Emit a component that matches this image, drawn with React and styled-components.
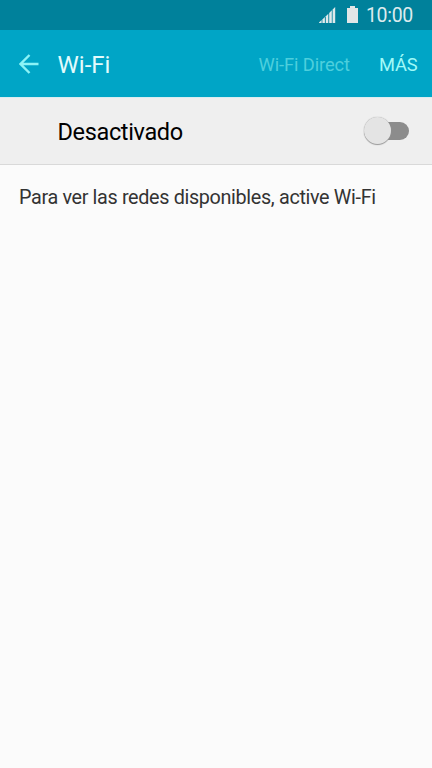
import styled, { createGlobalStyle } from "styled-components";

const App = () => {
  return (
    <Screen>
      <GlobalStyle />
      <StatusBar>
        <SignalIcon />
        <BatteryIcon />
        <Clock>10:00</Clock>
      </StatusBar>
      <ActionBar>
        <BackIcon />
        <Title>Wi-Fi</Title>
        <Action disabled>Wi-Fi Direct</Action>
        <Action>MÁS</Action>
      </ActionBar>
      <SwitchRow>
        <SwitchLabel>Desactivado</SwitchLabel>
        <Switch>
          <SwitchTrack />
          <SwitchThumb />
        </Switch>
      </SwitchRow>
      <Message>Para ver las redes disponibles, active Wi-Fi</Message>
    </Screen>
  );
};

export default App;

const SignalIcon = () => (
  <svg width="17" height="16" viewBox="0 0 17 16" fill="#dfe9eb">
    <path d="M0 16V15.6L2.6 13V16z" />
    <path d="M3.4 16V12.5L5.9 10V16z" />
    <path d="M6.8 16V9.2L9.3 6.7V16z" />
    <path d="M10.2 16V5.9L12.8 3.3V16z" />
    <path d="M13.6 16V2.6L16.2 0V16z" />
  </svg>
);

const BatteryIcon = () => (
  <BatterySvg width="11" height="17" viewBox="0 0 11 17" fill="#e2e6e7">
    <path d="M3 0h5v2h3v15H0V2h3z" />
  </BatterySvg>
);

const BackIcon = () => (
  <svg width="20" height="20" viewBox="0 0 20 20" fill="none">
    <path d="M19.5 10H2M10.5 1L1.5 10L10.5 19" stroke="#8cf3f6" strokeWidth="2.4" />
  </svg>
);

const GlobalStyle = createGlobalStyle`
  body {
    margin: 0;
    background: #fbfbfb;
  }
`;

const Screen = styled.div`
  width: 432px;
  height: 768px;
  background: #fbfbfb;
  font-family: Roboto, sans-serif;
  overflow: hidden;
`;

const StatusBar = styled.div`
  display: flex;
  align-items: center;
  justify-content: flex-end;
  height: 30px;
  padding-right: 19px;
  box-sizing: border-box;
  background: #00819b;
`;

const BatterySvg = styled.svg`
  margin: 0 8px 1px 11px;
`;

const Clock = styled.span`
  padding-top: 2px;
  font-size: 19.5px;
  line-height: 30px;
  letter-spacing: -0.3px;
  color: #dcebee;
`;

const ActionBar = styled.header`
  display: flex;
  align-items: center;
  height: 67px;
  padding: 0 14.5px 0 19px;
  box-sizing: border-box;
  background: #00a5c6;
`;

const Title = styled.h1`
  flex: 1;
  margin: 0 0 0 18.5px;
  padding-top: 2px;
  font-size: 24px;
  font-weight: 400;
  color: #e2fbfc;
`;

const Action = styled.button`
  margin-left: 29px;
  padding: 1px 0 0;
  border: 0;
  background: none;
  font-family: inherit;
  font-size: 18.3px;
  letter-spacing: -0.1px;
  color: ${({ disabled }) => (disabled ? "#4dcfdd" : "#a0faf8")};
`;

const SwitchRow = styled.div`
  display: flex;
  align-items: center;
  justify-content: space-between;
  height: 68px;
  padding: 0 23px 0 57.5px;
  box-sizing: border-box;
  background: #efefef;
  border-top: 1px solid #d9edf1;
  border-bottom: 1px solid #d9d9d9;
`;

const SwitchLabel = styled.span`
  padding-top: 2px;
  font-size: 23.5px;
  letter-spacing: -0.35px;
  color: #000;
`;

const Switch = styled.div`
  position: relative;
  display: flex;
  align-items: center;
  width: 45px;
  height: 28px;
`;

const SwitchTrack = styled.div`
  width: 45px;
  height: 18px;
  border-radius: 9px;
  background: #8c8c8c;
`;

const SwitchThumb = styled.div`
  position: absolute;
  top: 0;
  left: 0;
  width: 27px;
  height: 27px;
  border-radius: 50%;
  background: #e4e4e4;
  box-shadow: 0 0 1px #999, 0 1px 1px #999;
`;

const Message = styled.p`
  margin: 0;
  padding: 20px 19px;
  font-size: 19.8px;
  line-height: 26px;
  letter-spacing: -0.34px;
  color: #333;
`;
